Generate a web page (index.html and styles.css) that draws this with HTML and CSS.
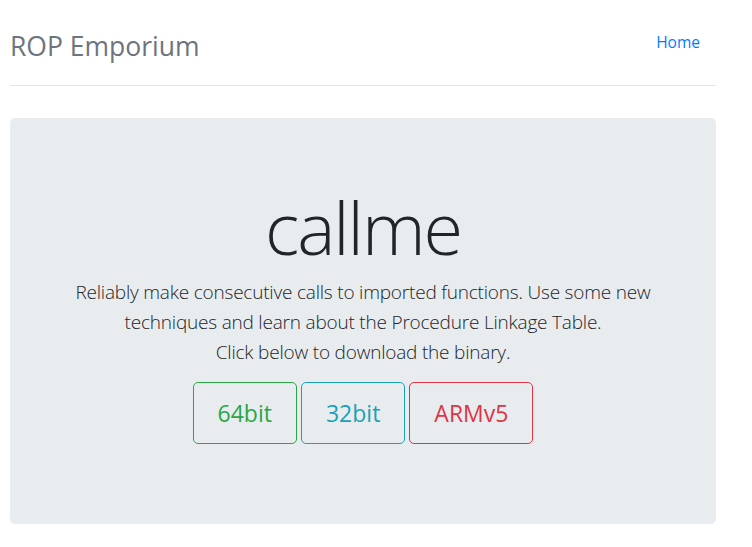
FILE: index.html
```html
<!DOCTYPE html>
<html lang="en">
<head>
<meta charset="utf-8">
<title>ROP Emporium - callme</title>
<link rel="stylesheet" href="styles.css">
</head>
<body>
<div class="container">
  <header class="header">
    <h3 class="brand">ROP Emporium</h3>
    <nav class="nav">
      <a class="nav-link" href="#">Home</a>
    </nav>
  </header>
  <main class="jumbotron">
    <h1 class="title">callme</h1>
    <p class="lead">Reliably make consecutive calls to imported functions. Use some new techniques and learn about the Procedure Linkage Table.<br>Click below to download the binary.</p>
    <div class="buttons">
      <a class="btn btn-success" href="#">64bit</a>
      <a class="btn btn-info" href="#">32bit</a>
      <a class="btn btn-danger" href="#">ARMv5</a>
    </div>
  </main>
</div>
</body>
</html>
```

FILE: styles.css
```css
html, body {
  margin: 0;
  padding: 0;
  background: #fff;
}
body {
  font-family: "Open Sans", "Noto Sans", sans-serif;
  color: #212529;
  font-size: 16px;
  line-height: 1.5;
}
.container {
  width: 706px;
  padding-left: 10px;
}
.header {
  display: flex;
  justify-content: space-between;
  align-items: flex-start;
  padding-top: 22px;
  padding-bottom: 22px;
  border-bottom: 1px solid #e5e5e5;
}
.brand {
  margin: 8px 0 0;
  font-size: 26.5px;
  font-weight: 400;
  line-height: 33px;
  color: #6c757d;
}
.nav {
  display: flex;
}
.nav-link {
  display: block;
  padding: 8px 16px;
  color: #007bff;
  text-decoration: none;
  font-size: 15.5px;
  line-height: 24px;
}
.jumbotron {
  margin-top: 32px;
  padding: 66px 32px 64px;
  background: #e9ecef;
  border-radius: 5px;
  text-align: center;
}
.title {
  margin: 0 0 7px;
  font-size: 72px;
  font-weight: 300;
  line-height: 1.2;
  letter-spacing: -2px;
  color: #212529;
}
.lead {
  margin: 0 0 15px;
  font-size: 19px;
  font-weight: 300;
  line-height: 30px;
  letter-spacing: -0.2px;
  color: #212529;
}
.buttons {
  display: flex;
  justify-content: center;
  gap: 4px;
  margin-bottom: 16px;
}
.btn {
  display: inline-block;
  padding: 12px 24px;
  font-size: 23px;
  line-height: 36px;
  border: 1px solid;
  border-radius: 5px;
  text-decoration: none;
  background: transparent;
}
.btn-success { color: #28a745; border-color: #28a745; }
.btn-info { color: #17a2b8; border-color: #17a2b8; }
.btn-danger { color: #dc3545; border-color: #dc3545; }
```
